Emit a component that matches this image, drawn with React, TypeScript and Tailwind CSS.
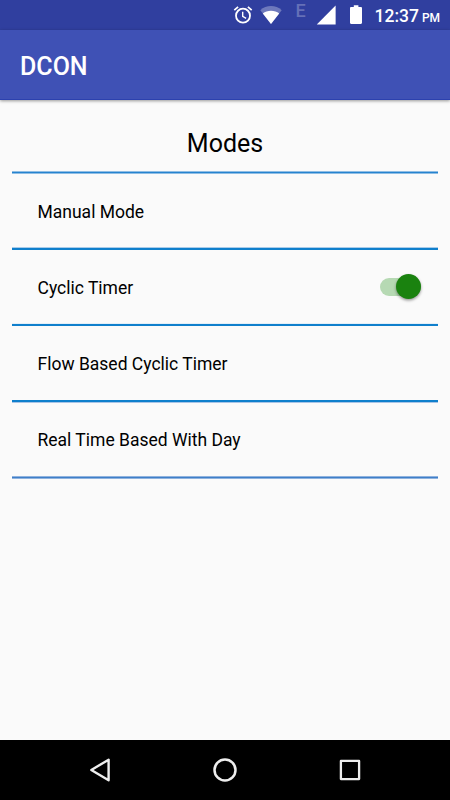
import { useState } from 'react';
import clsx from 'clsx';

const modes = [
  { name: 'Manual Mode', row: 'h-[73px]', divider: 'border-t border-[#a9cbe9] bg-[#0f7fcc]' },
  { name: 'Cyclic Timer', row: 'h-[73px]', divider: 'border-t border-[#e4eff8] bg-[#0f7fcc]' },
  { name: 'Flow Based Cyclic Timer', row: 'h-[74px]', divider: 'border-b border-[#a9c4e6] bg-[#0f7fcc]' },
  { name: 'Real Time Based With Day', row: 'h-[73px] pb-px', divider: 'border-y border-[#8fb2de] bg-[#3f7fc8]' },
];

function StatusBar() {
  return (
    <div className="flex h-[30px] items-start bg-[#303f9f] text-white">
      <svg className="ml-[233px] mt-[5px] h-5 w-5 shrink-0" viewBox="0 0 20 20" fill="none" stroke="currentColor">
        <circle cx="10" cy="10.7" r="7" strokeWidth="1.8" />
        <path d="M1.3 5.1 5.1 1.9M18.7 5.1l-3.8-3.2" strokeWidth="1.8" />
        <path d="M9.7 6.7v4.6l3.4 2" strokeWidth="1.4" />
      </svg>
      <svg className="ml-[7px] mt-[5px] h-5 w-[22px] shrink-0" viewBox="0 0 22 20" fill="currentColor">
        <path d="M11 19 .3 5.2C3.2 2.4 7 1.1 11 1.1s7.8 1.3 10.7 4.1L11 19z" opacity="0.3" />
        <path d="M11 19 2.8 8.4C5 6.7 7.8 5.7 11 5.7s6 1 8.2 2.7L11 19z" />
      </svg>
      <span className="ml-[13.5px] mt-px w-3 text-[18px] leading-5 font-medium text-[#6570b7]">E</span>
      <svg className="ml-[8.5px] mt-[5px] h-5 w-5 shrink-0" viewBox="0 0 20 20" fill="currentColor">
        <path d="M19.6.6v18.9H.8z" />
      </svg>
      <svg className="ml-[14px] mt-[5px] h-5 w-3 shrink-0" viewBox="0 0 12 20" fill="currentColor">
        <path d="M3.8.3h4.6V2h2.4c.7 0 1.2.5 1.2 1.2v14.6c0 .7-.5 1.2-1.2 1.2H1.2C.5 19 0 18.5 0 17.8V3.2C0 2.5.5 2 1.2 2h2.6z" />
      </svg>
      <span className="ml-[12.5px] mt-[4px] text-[17.5px] leading-6 font-medium whitespace-nowrap">
        12:37<span className="ml-[3px] text-[12px]">PM</span>
      </span>
    </div>
  );
}

function NavBar() {
  return (
    <div className="flex h-[60px] items-center justify-center gap-[95px] bg-black text-[#eeeeee]">
      <svg className="h-[30px] w-[30px]" viewBox="0 0 30 30" fill="none" stroke="currentColor" strokeWidth="2.4" strokeLinejoin="round">
        <path d="M23.6 4.7v20.6L6.3 15z" />
      </svg>
      <svg className="h-[30px] w-[30px]" viewBox="0 0 30 30" fill="none" stroke="currentColor" strokeWidth="2.5">
        <circle cx="15" cy="15" r="10.5" />
      </svg>
      <svg className="h-[30px] w-[30px]" viewBox="0 0 30 30" fill="none" stroke="currentColor" strokeWidth="2.3" strokeLinejoin="round">
        <path d="M5.9 5.9h18.2v18.2H5.9z" />
      </svg>
    </div>
  );
}

export default function App() {
  const [cyclic, setCyclic] = useState(true);

  return (
    <div className="flex h-[800px] w-[450px] flex-col bg-[#fafafa] font-['Roboto',sans-serif]">
      <StatusBar />

      <header className="flex h-[70px] items-center border-b border-[#2c41ae] bg-[#3f51b5] pt-[5px] pl-5 shadow-[0_1px_3px_rgba(0,0,0,0.4)]">
        <h1 className="text-[25px] leading-8 font-medium text-white">DCON</h1>
      </header>

      <main className="flex-1 px-[12.5px]">
        <h2 className="h-[71px] pt-[28px] text-center text-[25px] leading-8 text-black">Modes</h2>
        <div className="-ml-[0.5px] h-[3px] border-y border-[#8fbde4] bg-[#2583cf]" />

        {modes.map((mode) => (
          <div key={mode.name}>
            <div className={clsx('flex items-center justify-between pr-[17px] pl-[25px]', mode.row)}>
              <span className="pt-[2px] text-[17.5px] leading-6 text-black">{mode.name}</span>
              {mode.name === 'Cyclic Timer' && (
                <button
                  role="switch"
                  aria-checked={cyclic}
                  aria-label={mode.name}
                  onClick={() => setCyclic(!cyclic)}
                  className={clsx(
                    'flex h-[18px] w-[41px] items-center rounded-full',
                    cyclic ? 'justify-end bg-[#b6d9b3]' : 'justify-start bg-gray-300'
                  )}
                >
                  <span
                    className={clsx(
                      'h-[25px] w-[25px] rounded-full shadow-[0_1.5px_3px_rgba(0,0,0,0.4)]',
                      cyclic ? 'bg-[#1a820f]' : 'bg-gray-50'
                    )}
                  />
                </button>
              )}
            </div>
            <div className={clsx('-ml-[0.5px] h-[3px]', mode.divider)} />
          </div>
        ))}
      </main>

      <NavBar />
    </div>
  );
}
